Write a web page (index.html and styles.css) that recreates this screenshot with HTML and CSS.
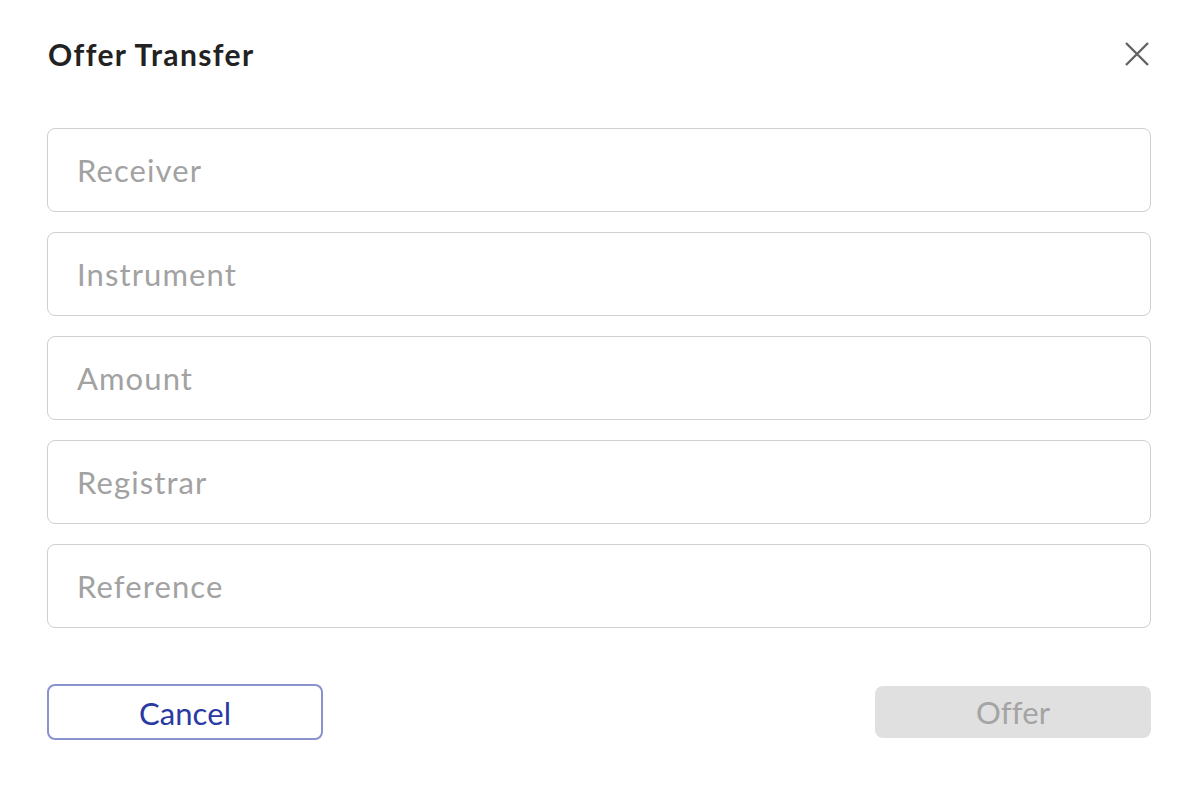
FILE: index.html
```html
<!DOCTYPE html>
<html lang="en">
<head>
<meta charset="utf-8">
<title>Offer Transfer</title>
<link rel="stylesheet" href="styles.css">
</head>
<body>
<div class="dialog">
  <div class="header">
    <h2 class="title">Offer Transfer</h2>
    <button class="close" aria-label="Close">
      <svg width="24" height="24" viewBox="0 0 24 24"><path d="M1 1 L23 23 M23 1 L1 23" stroke="#646464" stroke-width="2.4" fill="none"/></svg>
    </button>
  </div>
  <div class="fields">
    <input class="field" placeholder="Receiver">
    <input class="field" placeholder="Instrument">
    <input class="field" placeholder="Amount">
    <input class="field" placeholder="Registrar">
    <input class="field" placeholder="Reference">
  </div>
  <div class="actions">
    <button class="btn btn-cancel">Cancel</button>
    <button class="btn btn-offer" disabled>Offer</button>
  </div>
</div>
</body>
</html>
```
FILE: styles.css
```css
html, body {
  margin: 0;
  padding: 0;
  background: #ffffff;
}
body {
  font-family: Lato, "Open Sans", Arial, sans-serif;
}
.dialog {
  padding: 36px 47px 0 47px;
}
.header {
  display: flex;
  justify-content: space-between;
  align-items: center;
  height: 36px;
}
.title {
  margin: 0;
  font-size: 30px;
  line-height: 36px;
  font-weight: 700;
  letter-spacing: 1.4px;
  color: #222222;
  padding-left: 1px;
}
.close {
  width: 24px;
  height: 24px;
  padding: 0;
  margin-right: 2px;
  border: none;
  background: none;
  display: flex;
  align-items: center;
  justify-content: center;
}
.fields {
  margin-top: 56px;
  display: flex;
  flex-direction: column;
  gap: 20px;
}
.field {
  box-sizing: border-box;
  height: 84px;
  width: 100%;
  border: 1px solid #cfcfd3;
  border-radius: 8px;
  padding: 0 28px 0 29px;
  font-family: Lato, "Open Sans", Arial, sans-serif;
  font-size: 31px;
  letter-spacing: 1.1px;
  color: #333;
  outline: none;
  background: #fff;
}
.field::placeholder {
  color: #a2a2a2;
  opacity: 1;
}
.actions {
  margin-top: 56px;
  display: flex;
  justify-content: space-between;
  align-items: center;
}
.btn {
  box-sizing: border-box;
  width: 276px;
  font-family: Lato, "Open Sans", Arial, sans-serif;
  font-size: 31px;
  border-radius: 8px;
  padding: 0;
  letter-spacing: 0.1px;
}
.btn-cancel {
  height: 56px;
  width: 276px;
  background: #fff;
  border: 2px solid #8a92d0;
  color: #2a3aa3;
  padding-top: 1px;
}
.btn-offer {
  height: 52px;
  background: #e0e0e0;
  border: none;
  color: #a4a4a4;
}
```
